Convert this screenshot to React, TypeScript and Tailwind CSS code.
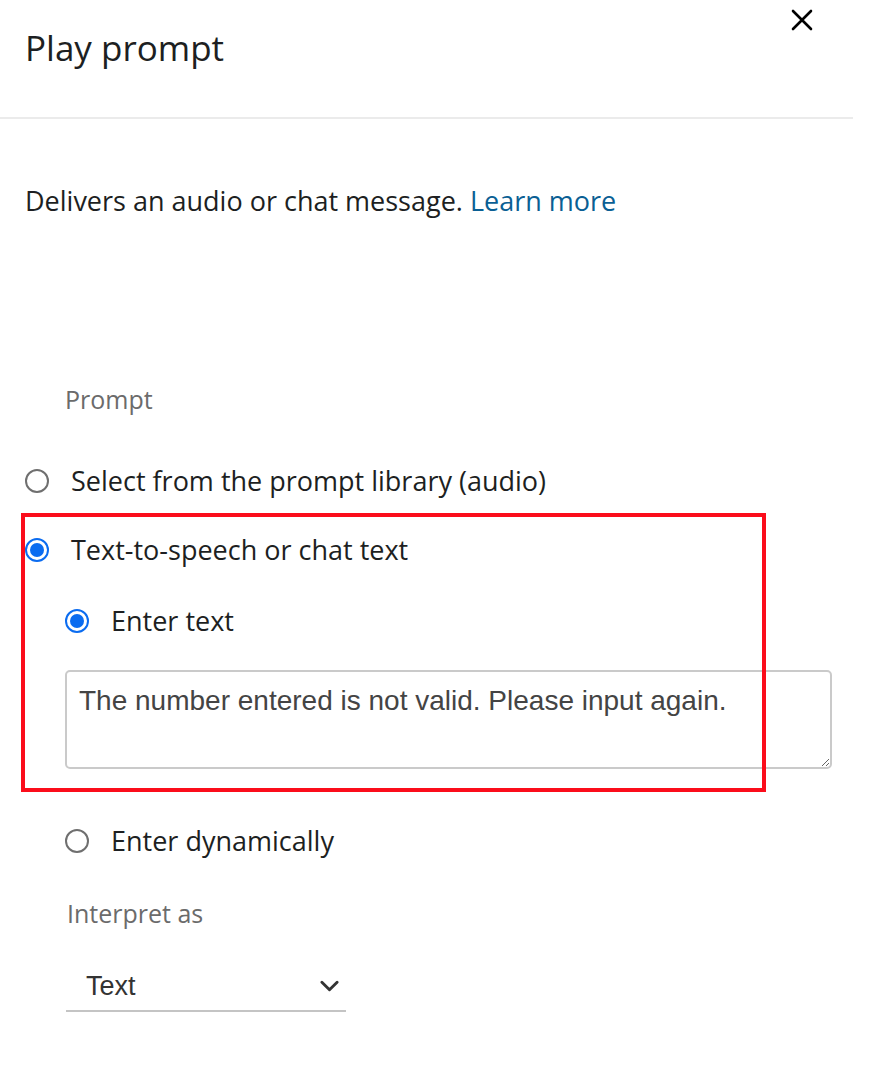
import React, { useState } from 'react';

const Radio: React.FC<{ checked?: boolean }> = ({ checked }) =>
  checked ? (
    <span className="w-[24px] h-[24px] shrink-0 rounded-full border-2 border-[#0b6cf0] flex items-center justify-center">
      <span className="w-[14px] h-[14px] rounded-full bg-[#0b6cf0]" />
    </span>
  ) : (
    <span className="w-[24px] h-[24px] shrink-0 rounded-full border-2 border-[#6f6f6f] bg-white" />
  );

const App: React.FC = () => {
  const [text, setText] = useState('The number entered is not valid. Please input again.');

  return (
    <div className="w-[882px] h-[1084px] bg-white overflow-hidden font-['Open_Sans',sans-serif] text-[#1d1f22]">
      <div className="w-[853px]">
        {/* Header */}
        <div className="h-[119px] border-b-2 border-[#ebebeb] flex items-start justify-between pl-[25px] pr-[40px]">
          <h1 className="pt-[27px] text-[35px] leading-[42px] font-normal">Play prompt</h1>
          <button className="mt-[9px] w-[22px] h-[22px] text-black">
            <svg viewBox="0 0 22 22" className="w-[22px] h-[22px]" fill="none" stroke="currentColor" strokeWidth="2.6" strokeLinecap="round">
              <path d="M2 2 L20 20 M20 2 L2 20" />
            </svg>
          </button>
        </div>

        <p className="pl-[25px] mt-[63px] text-[27px] leading-[38px]">
          Delivers an audio or chat message. <a className="text-[#0a5f94]">Learn more</a>
        </p>

        {/* Prompt section */}
        <div className="relative mt-[164px] pl-[25px]">
          <div className="pl-[40px] text-[25px] leading-[30px] text-[#6b6b6b]">Prompt</div>

          <label className="mt-[47px] h-[40px] flex items-center gap-[22px] text-[27px]">
            <Radio />
            <span>Select from the prompt library (audio)</span>
          </label>

          <label className="mt-[29px] h-[40px] flex items-center gap-[22px] text-[27px]">
            <Radio checked />
            <span>Text-to-speech or chat text</span>
          </label>

          <div className="pl-[40px]">
            <label className="mt-[31px] h-[40px] flex items-center gap-[22px] text-[27px]">
              <Radio checked />
              <span>Enter text</span>
            </label>

            <textarea
              value={text}
              onChange={(e) => setText(e.target.value)}
              className="mt-[29px] block w-[767px] h-[99px] border-2 border-[#cacaca] rounded-[5px] px-[12px] pt-[12px] font-['Liberation_Sans',Arial,sans-serif] text-[28px] leading-[34px] text-[#444] outline-none resize-y"
            />

            <label className="mt-[52px] h-[40px] flex items-center gap-[22px] text-[27px]">
              <Radio />
              <span>Enter dynamically</span>
            </label>

            <div className="mt-[37px] pl-[2px] text-[25px] leading-[30px] text-[#6b6b6b]">Interpret as</div>

            <div className="mt-[34px] ml-[1px] w-[280px] h-[50px] border-b-2 border-[#c4c4c4] flex items-center justify-between pl-[20px] pr-[7px] font-['Liberation_Sans',Arial,sans-serif] text-[27px] text-[#333]">
              <span>Text</span>
              <svg viewBox="0 0 20 12" className="w-[19px] h-[12px]" fill="none" stroke="#333" strokeWidth="3" strokeLinecap="round" strokeLinejoin="round">
                <path d="M2 2 L10 10 L18 2" />
              </svg>
            </div>
          </div>

          {/* annotation box */}
          <div className="absolute pointer-events-none border-4 border-[#fb0d1b] left-[21px] top-[129px] w-[745px] h-[279px]" />
        </div>
      </div>
    </div>
  );
};

export default App;
